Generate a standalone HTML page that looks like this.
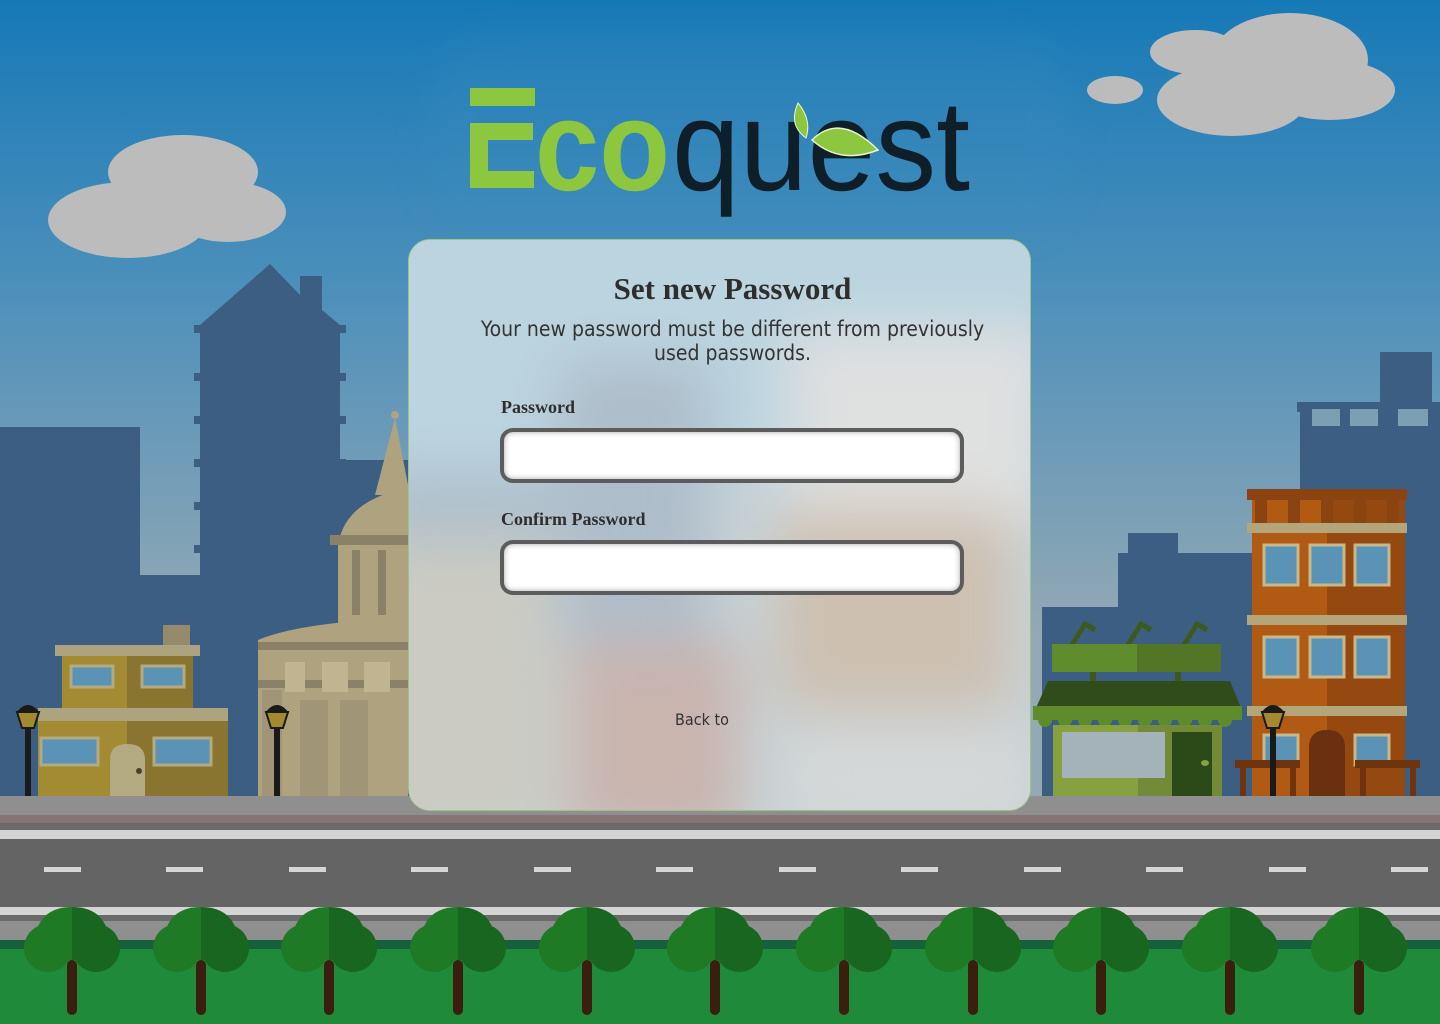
<!DOCTYPE html>
<html><head><meta charset="utf-8"><style>
html,body{margin:0;padding:0;width:1440px;height:1024px;overflow:hidden}
body{position:relative;font-family:"Liberation Sans",sans-serif}
svg.bg{position:absolute;left:0;top:0}
.card{position:absolute;left:408px;top:239px;width:621px;height:570px;border:1px solid #9cc48a;border-radius:22px;background:#c9d6dc;overflow:hidden}
.card svg{position:absolute;left:0;top:0}
.t{position:absolute;left:13px;width:621px;text-align:center}
h1{position:absolute;top:31px;left:13px;width:621px;margin:0;text-align:center;font:bold 31px "Liberation Serif",serif;color:#2e2e2e}
.sub{top:77px;font-size:21px;line-height:24px;color:#333;font-family:"DejaVu Sans Condensed","Liberation Sans",sans-serif}
.lbl{position:absolute;left:92px;font:bold 18px "Liberation Serif",serif;color:#2e2e2e}
.inp{position:absolute;left:91px;width:456px;height:47px;border:4px solid #5c5c5c;border-radius:13px;background:#fff;box-shadow:inset 0 0 6px rgba(0,0,0,.35)}
.back{position:absolute;top:470px;left:266px;font-size:16px;color:#333;font-family:"DejaVu Sans Condensed","Liberation Sans",sans-serif}
</style></head><body>
<svg class="bg" width="1440" height="1024" viewBox="0 0 1440 1024">
<defs>
<linearGradient id="sky" x1="0" y1="0" x2="0" y2="1">
<stop offset="0" stop-color="#1679b7"/><stop offset="0.35" stop-color="#4b8fbb"/><stop offset="0.8" stop-color="#95a9b4"/></linearGradient>
<filter id="gb" x="-30%" y="-30%" width="160%" height="160%"><feGaussianBlur stdDeviation="18"/></filter>
<g id="tree"><rect x="-5" y="960" width="10" height="55" rx="5" fill="#3b1f0e"/>
<ellipse cx="-24" cy="948" rx="24" ry="24" fill="#1e7a25"/><ellipse cx="24" cy="948" rx="24" ry="24" fill="#196620"/>
<path d="M-38 950 Q-38 907 0 907 L0 960 L-38 960Z" fill="#1e7a25"/><path d="M38 950 Q38 907 0 907 L0 960 L38 960Z" fill="#196620"/></g>
<g id="lamp"><rect x="-3" y="720" width="6" height="82" fill="#1a1a1a"/><path d="M-10 805 L10 805 L4 798 L-4 798Z" fill="#1a1a1a"/>
<path d="M-11 712 L11 712 L6 728 L-6 728Z" fill="#a48a2e" stroke="#1a1a1a" stroke-width="2"/><path d="M-12 713 Q0 697 12 713Z" fill="#1a1a1a"/></g>
</defs>
<rect width="1440" height="800" fill="url(#sky)"/>
<g fill="#bcbcbc"><ellipse cx="183" cy="172" rx="75" ry="37"/><ellipse cx="128" cy="220" rx="80" ry="38"/><ellipse cx="228" cy="212" rx="58" ry="30"/>
<ellipse cx="1290" cy="60" rx="78" ry="47"/><ellipse cx="1232" cy="100" rx="75" ry="36"/><ellipse cx="1330" cy="90" rx="65" ry="30"/><ellipse cx="1195" cy="52" rx="45" ry="22"/><ellipse cx="1115" cy="90" rx="28" ry="14"/></g>
<rect x="430" y="40" width="640" height="190" rx="60" fill="#3c8dc0" opacity="0.25" filter="url(#gb)"/>
<g fill="#3c5e82"><rect x="0" y="427" width="140" height="370"/><rect x="140" y="575" width="70" height="222"/>
<path d="M200 325 L194 325 L194 333 L200 333 V797 H340 V333 H346 V325 H340 L322 310 V276 H300 V295 L270 264 Z"/>
<rect x="194" y="373" width="152" height="8"/><rect x="194" y="416" width="152" height="8"/><rect x="194" y="459" width="152" height="8"/><rect x="194" y="502" width="152" height="8"/><rect x="194" y="545" width="152" height="8"/>
<rect x="340" y="460" width="70" height="340"/></g>
<g><path d="M375 495 L395 418 L410 495Z" fill="#aea27f"/><circle cx="395" cy="415" r="4" fill="#aea27f"/>
<path d="M338 545 Q345 500 408 488 V545Z" fill="#aea27f"/><rect x="330" y="535" width="80" height="10" fill="#8b8068"/>
<rect x="338" y="545" width="72" height="80" fill="#aea27f"/><rect x="352" y="550" width="8" height="65" fill="#8b8068"/><rect x="378" y="550" width="8" height="65" fill="#8b8068"/>
<path d="M258 640 Q300 622 408 618 V797 H258Z" fill="#aea27f"/><rect x="258" y="642" width="150" height="8" fill="#8b8068"/><rect x="258" y="680" width="150" height="8" fill="#8b8068"/>
<rect x="285" y="662" width="20" height="30" fill="#c0b590"/><rect x="322" y="662" width="26" height="30" fill="#c0b590"/><rect x="364" y="662" width="26" height="30" fill="#c0b590"/>
<rect x="262" y="690" width="20" height="107" fill="#a09576"/><rect x="300" y="700" width="28" height="97" fill="#a09576"/><rect x="340" y="700" width="28" height="97" fill="#a09576"/></g>
<g><rect x="163" y="625" width="27" height="22" fill="#958b6c"/><rect x="55" y="645" width="145" height="11" fill="#aea37f"/>
<rect x="62" y="656" width="65" height="56" fill="#a38b33"/><rect x="127" y="656" width="66" height="56" fill="#8a7530"/>
<rect x="38" y="708" width="190" height="13" fill="#aea37f"/><rect x="38" y="721" width="89" height="75" fill="#a38b33"/><rect x="127" y="721" width="101" height="75" fill="#8a7530"/>
<g fill="#5a93b5" stroke="#b3aa82" stroke-width="3"><rect x="71" y="666" width="42" height="21"/><rect x="142" y="666" width="42" height="21"/><rect x="41" y="738" width="57" height="27"/><rect x="154" y="738" width="57" height="27"/></g>
<path d="M110 796 V760 Q110 744 127 744 Q145 744 145 760 V796Z" fill="#b3aa82"/><circle cx="139" cy="771" r="3" fill="#4a4030"/></g>
<use href="#lamp" x="28"/><use href="#lamp" x="277"/>
<g fill="#3c5e82"><rect x="1380" y="352" width="52" height="50"/><rect x="1297" y="402" width="143" height="10"/><rect x="1300" y="402" width="140" height="395"/>
<rect x="1118" y="553" width="135" height="244"/><rect x="1128" y="533" width="50" height="25"/><rect x="1042" y="607" width="110" height="190"/></g>
<g fill="#7d9fb3"><rect x="1312" y="409" width="28" height="17"/><rect x="1350" y="409" width="28" height="17"/><rect x="1398" y="409" width="30" height="17"/></g>
<g><rect x="1252" y="500" width="75" height="296" fill="#b05a14"/><rect x="1327" y="500" width="78" height="296" fill="#954810"/>
<rect x="1247" y="489" width="160" height="11" fill="#8c4312"/><g fill="#8c4312"><rect x="1255" y="498" width="12" height="30"/><rect x="1288" y="498" width="12" height="30"/><rect x="1321" y="498" width="12" height="30"/><rect x="1354" y="498" width="12" height="30"/><rect x="1387" y="498" width="12" height="30"/></g>
<g fill="#b5a57a"><rect x="1247" y="523" width="160" height="10"/><rect x="1247" y="615" width="160" height="10"/><rect x="1247" y="706" width="160" height="10"/></g>
<g fill="#5a93b5" stroke="#c7b889" stroke-width="3"><rect x="1264" y="545" width="34" height="40"/><rect x="1310" y="545" width="34" height="40"/><rect x="1355" y="545" width="34" height="40"/>
<rect x="1264" y="637" width="34" height="40"/><rect x="1310" y="637" width="34" height="40"/><rect x="1355" y="637" width="34" height="40"/><rect x="1264" y="735" width="34" height="30"/><rect x="1355" y="735" width="34" height="30"/></g>
<path d="M1309 796 V748 Q1309 730 1327 730 Q1345 730 1345 748 V796Z" fill="#6a3010"/>
<g fill="#6e3410"><rect x="1235" y="760" width="65" height="8"/><rect x="1355" y="760" width="65" height="8"/><rect x="1240" y="768" width="6" height="28"/><rect x="1290" y="768" width="6" height="28"/><rect x="1360" y="768" width="6" height="28"/><rect x="1410" y="768" width="6" height="28"/></g></g>
<g><g stroke="#3b5a1c" stroke-width="5" fill="none"><path d="M1070 648 L1085 624 L1095 630"/><path d="M1126 648 L1141 624 L1151 630"/><path d="M1182 648 L1197 624 L1207 630"/></g>
<rect x="1052" y="644" width="85" height="28" fill="#5f8c2c"/><rect x="1137" y="644" width="84" height="28" fill="#527526"/>
<rect x="1090" y="672" width="6" height="12" fill="#3b5a1c"/><rect x="1175" y="672" width="6" height="12" fill="#3b5a1c"/>
<path d="M1048 681 H1230 L1241 708 H1036Z" fill="#304c1a"/><rect x="1033" y="706" width="209" height="14" fill="#5e8c2c"/>
<g fill="#5e8c2c"><circle cx="1045" cy="720" r="7"/><circle cx="1065" cy="720" r="7"/><circle cx="1085" cy="720" r="7"/><circle cx="1105" cy="720" r="7"/><circle cx="1125" cy="720" r="7"/><circle cx="1145" cy="720" r="7"/><circle cx="1165" cy="720" r="7"/><circle cx="1185" cy="720" r="7"/><circle cx="1205" cy="720" r="7"/><circle cx="1225" cy="720" r="7"/></g>
<rect x="1053" y="725" width="85" height="71" fill="#87a040"/><rect x="1138" y="725" width="84" height="71" fill="#738a38"/>
<rect x="1062" y="732" width="103" height="46" fill="#a4b2b9"/><rect x="1172" y="732" width="40" height="64" fill="#2b4a18"/><ellipse cx="1205" cy="763" rx="4" ry="3" fill="#87a040"/></g>
<use href="#lamp" x="1273"/>
<rect x="0" y="796" width="1440" height="20" fill="#8f8f8f"/><rect x="0" y="815" width="1440" height="8" fill="#857474"/>
<rect x="0" y="823" width="1440" height="8" fill="#6a6a6a"/><rect x="0" y="830" width="1440" height="9" fill="#d4d4d4"/>
<rect x="0" y="839" width="1440" height="68" fill="#646464"/><rect x="0" y="907" width="1440" height="8" fill="#d4d4d4"/>
<rect x="0" y="915" width="1440" height="6" fill="#6a6a6a"/><rect x="0" y="921" width="1440" height="20" fill="#8f8f8f"/>
<rect x="0" y="940" width="1440" height="9" fill="#17603c"/><rect x="0" y="949" width="1440" height="75" fill="#1e8a3a"/>
<g fill="#d6d6d6"><rect x="44" y="867" width="37" height="5"/><rect x="166" y="867" width="37" height="5"/><rect x="289" y="867" width="37" height="5"/><rect x="411" y="867" width="37" height="5"/><rect x="534" y="867" width="37" height="5"/><rect x="656" y="867" width="37" height="5"/><rect x="779" y="867" width="37" height="5"/><rect x="901" y="867" width="37" height="5"/><rect x="1024" y="867" width="37" height="5"/><rect x="1146" y="867" width="37" height="5"/><rect x="1269" y="867" width="37" height="5"/><rect x="1391" y="867" width="37" height="5"/></g>
<use href="#tree" x="72"/><use href="#tree" x="201"/><use href="#tree" x="329"/><use href="#tree" x="458"/><use href="#tree" x="587"/><use href="#tree" x="715"/><use href="#tree" x="844"/><use href="#tree" x="973"/><use href="#tree" x="1101"/><use href="#tree" x="1230"/><use href="#tree" x="1359"/>
<g fill="#8dc63f"><rect x="470" y="88" width="65" height="18"/><rect x="470" y="123" width="63" height="17"/><rect x="470" y="123" width="18" height="65"/><rect x="470" y="171" width="64" height="17"/></g>
<text x="535" y="190" font-family="Liberation Sans" font-weight="bold" font-size="129" fill="#8dc63f" textLength="135" lengthAdjust="spacingAndGlyphs">co</text>
<text x="672" y="190" font-family="Liberation Sans" font-size="129" fill="#0f1f2a" textLength="298" lengthAdjust="spacingAndGlyphs">quest</text>
<path d="M798 103 Q788 125 806 138 Q812 120 798 103Z" fill="#8dc63f" stroke="#e8f5d0" stroke-width="1"/>
<path d="M812 140 Q840 112 878 150 Q840 165 812 140Z" fill="#8dc63f" stroke="#e8f5d0" stroke-width="1.5"/>
</svg>
<div class="card">
<svg width="621" height="570" viewBox="0 0 621 570">
<defs><filter id="cb" x="-50%" y="-50%" width="200%" height="200%"><feGaussianBlur stdDeviation="28"/></filter></defs>
<rect width="621" height="570" fill="#c8d2d6"/>
<g filter="url(#cb)">
<rect x="-60" y="-60" width="760" height="300" fill="#bcd4e0"/>
<rect x="150" y="120" width="150" height="280" fill="#aebdca"/>
<rect x="380" y="90" width="260" height="200" fill="#dfe0e0"/>
<rect x="-40" y="280" width="180" height="320" fill="#cbcbc2"/>
<rect x="160" y="400" width="170" height="200" fill="#c9b4ae"/>
<rect x="370" y="270" width="230" height="200" fill="#cdc0b0"/>
<rect x="380" y="490" width="240" height="100" fill="#d5d8d8"/>
<rect x="-40" y="230" width="200" height="70" fill="#aebfcc"/>
</g>
</svg>
<h1>Set new Password</h1>
<div class="t sub">Your new password must be different from previously<br>used passwords.</div>
<div class="lbl" style="top:157px">Password</div>
<div class="inp" style="top:188px"></div>
<div class="lbl" style="top:269px">Confirm Password</div>
<div class="inp" style="top:300px"></div>
<div class="back">Back to</div>
</div>
</body></html>
